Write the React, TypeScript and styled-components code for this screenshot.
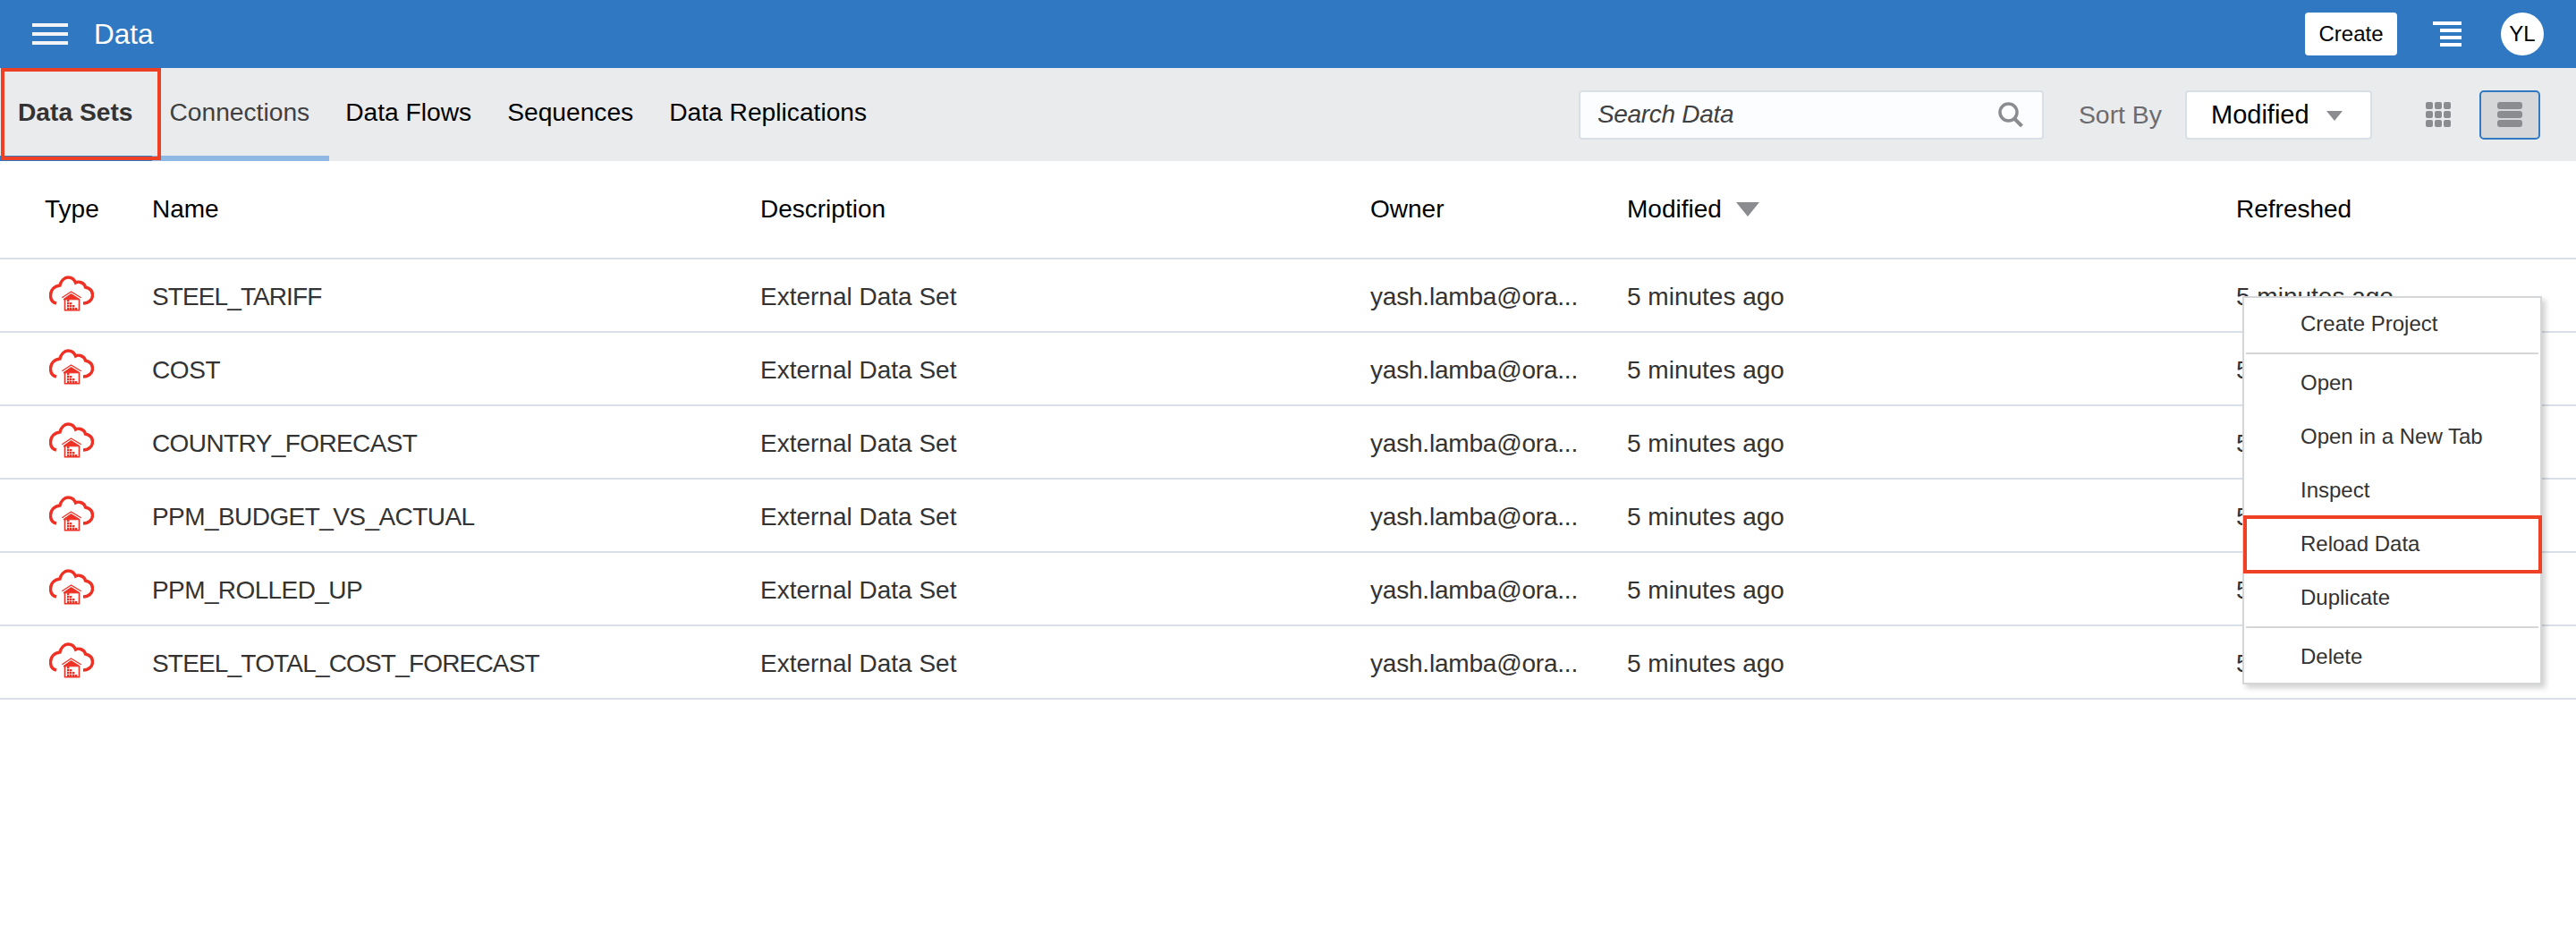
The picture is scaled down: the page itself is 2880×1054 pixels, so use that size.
import React from "react";
import styled, { createGlobalStyle } from "styled-components";

const GlobalStyle = createGlobalStyle`
  html, body {
    margin: 0;
    padding: 0;
    background: #fff;
    font-family: "Liberation Sans", Arial, sans-serif;
  }
`;

const Page = styled.div`
  position: relative;
  width: 2880px;
  height: 1054px;
  overflow: hidden;
  background: #fff;
`;

const Header = styled.header`
  display: flex;
  align-items: center;
  height: 76px;
  padding: 0 36px;
  background: #3079c2;
  color: #fff;
`;

const Hamburger = styled.div`
  display: flex;
  flex-direction: column;
  justify-content: space-between;
  width: 40px;
  height: 24px;
  margin-right: 29px;

  span {
    height: 4px;
    background: #f2f4f7;
  }
`;

const PageTitle = styled.div`
  flex: 1;
  font-size: 31.5px;
`;

const CreateButton = styled.button`
  width: 103px;
  height: 48px;
  padding: 0;
  border: none;
  border-radius: 4px;
  background: #fff;
  color: #000;
  font-family: inherit;
  font-size: 24px;
`;

const TocIcon = styled.div`
  display: flex;
  flex-direction: column;
  align-items: flex-end;
  gap: 4px;
  width: 32px;
  margin: 0 44px 0 40px;

  span {
    width: 24px;
    height: 4px;
    background: #fff;
  }

  span:first-child {
    width: 32px;
  }
`;

const Avatar = styled.div`
  display: flex;
  align-items: center;
  justify-content: center;
  width: 48px;
  height: 48px;
  border-radius: 50%;
  background: #fff;
  color: #000;
  font-size: 24px;
`;

const SubBar = styled.div`
  position: relative;
  display: flex;
  align-items: center;
  height: 104px;
  padding-right: 40px;
  background: #eaebed;
`;

const Tabs = styled.nav`
  flex: 1;
  display: flex;
  align-items: stretch;
  align-self: stretch;
`;

const Tab = styled.div<{ $active?: boolean; $muted?: boolean }>`
  display: flex;
  align-items: center;
  height: 100%;
  margin-left: ${(p) => (p.$active ? "20px" : "0")};
  margin-right: ${(p) => (p.$active ? "41px" : "40px")};
  padding-bottom: 6px;
  box-sizing: border-box;
  font-size: 28.2px;
  font-weight: ${(p) => (p.$active ? 700 : 400)};
  color: ${(p) => (p.$active ? "#333" : p.$muted ? "#404040" : "#000")};
`;

const TabTrack = styled.div`
  position: absolute;
  left: 0;
  bottom: 0;
  width: 368px;
  height: 6px;
  background: #8fb8e4;
`;

const TabThumb = styled.div`
  position: absolute;
  left: 0;
  bottom: 0;
  width: 170px;
  height: 6px;
  background: #3079c2;
`;

const SearchBox = styled.div`
  display: flex;
  align-items: center;
  justify-content: space-between;
  box-sizing: border-box;
  width: 520px;
  height: 55px;
  padding: 0 21px 0 19px;
  border: 2px solid #d9dfe6;
  border-radius: 4px;
  background: #fcfdfe;
  font-size: 28px;
  font-style: italic;
  letter-spacing: -0.3px;
  color: #404040;
`;

const SortLabel = styled.span`
  margin: 0 26px 0 39px;
  font-size: 28.4px;
  color: #6a6c70;
`;

const SortSelect = styled.div`
  display: flex;
  align-items: center;
  box-sizing: border-box;
  width: 209px;
  height: 55px;
  padding-left: 27px;
  border: 2px solid #d9dfe6;
  border-radius: 4px;
  background: #fff;
  color: #000;
  font-size: 29px;
`;

const Caret = styled.span<{ $w: number; $h: number }>`
  width: 0;
  height: 0;
  border-left: ${(p) => p.$w / 2}px solid transparent;
  border-right: ${(p) => p.$w / 2}px solid transparent;
  border-top: ${(p) => p.$h}px solid #8a8c90;
`;

const SortCaret = styled(Caret)`
  margin: 3px 0 0 19px;
`;

const ViewButton = styled.div<{ $selected?: boolean }>`
  display: flex;
  align-items: center;
  justify-content: center;
  box-sizing: border-box;
  width: 68px;
  height: 55px;
  margin-left: ${(p) => (p.$selected ? "12px" : "40px")};
  border: 2px solid ${(p) => (p.$selected ? "#3079c2" : "transparent")};
  border-radius: 5px;
  background: ${(p) => (p.$selected ? "#d6d7d9" : "transparent")};
`;

const GridDots = styled.div`
  display: grid;
  grid-template-columns: repeat(3, 8px);
  grid-auto-rows: 8px;
  gap: 2px;

  span {
    border-radius: 2px;
    background: #8a8c90;
  }
`;

const ListBars = styled.div`
  display: flex;
  flex-direction: column;
  gap: 2px;

  span {
    width: 28px;
    height: 8px;
    border-radius: 3px;
    background: #8a8c90;
  }
`;

const COLUMNS = "170px 680px 682px 287px 681px 1fr";

const HeadRow = styled.div`
  display: grid;
  grid-template-columns: ${COLUMNS};
  align-items: center;
  box-sizing: border-box;
  height: 110px;
  border-bottom: 2px solid #d9dfe6;
  font-size: 28px;
  color: #000;
`;

const HeadCell = styled.div<{ $first?: boolean }>`
  display: flex;
  align-items: center;
  gap: 16px;
  padding-left: ${(p) => (p.$first ? "50px" : "0")};
`;

const Row = styled.div`
  display: grid;
  grid-template-columns: ${COLUMNS};
  align-items: center;
  box-sizing: border-box;
  height: 82px;
  border-bottom: 2px solid #d9dfe6;
  font-size: 28px;
  color: #333;
`;

const TypeCell = styled.div`
  display: flex;
  padding: 0 0 4px 55px;
`;

const Cell = styled.div<{ $tracking?: number }>`
  padding-top: 4px;
  white-space: nowrap;
  letter-spacing: ${(p) => p.$tracking ?? 0}px;
`;

const Menu = styled.div`
  position: absolute;
  left: 2507px;
  top: 331px;
  box-sizing: border-box;
  width: 335px;
  height: 434px;
  border: 2px solid #d4d6d8;
  background: #fff;
  box-shadow: 4px 4px 6px rgba(0, 0, 0, 0.18);
  font-size: 24px;
  color: #333;
`;

const MenuItem = styled.div`
  display: flex;
  align-items: center;
  box-sizing: border-box;
  height: 60px;
  padding-left: 63px;

  &:first-child {
    height: 59px;
    padding-bottom: 2px;
  }
`;

const MenuDivider = styled.div`
  height: 2px;
  margin: 2px;
  background: #d4d6d8;
`;

const Callout = styled.div<{ $x: number; $y: number; $w: number; $h: number }>`
  position: absolute;
  left: ${(p) => p.$x}px;
  top: ${(p) => p.$y}px;
  box-sizing: border-box;
  width: ${(p) => p.$w}px;
  height: ${(p) => p.$h}px;
  border: 4px solid #ee4025;
`;

function SearchIcon() {
  return (
    <svg width="28" height="28" viewBox="0 0 28 28" fill="none" stroke="#8a8c90">
      <circle cx="11.5" cy="11.5" r="9.5" strokeWidth="3.5" />
      <path d="M18 18.5l8.5 8.5" strokeWidth="4" />
    </svg>
  );
}

const RED = "#ee3124";

function CloudWarehouseIcon() {
  // stepped "pixels" inside the warehouse door
  const blocks: [number, number][] = [
    [20, 27], [20, 30], [20, 33], [20, 36],
    [23, 30], [23, 33], [23, 36],
    [26, 33], [26, 36],
    [29, 36],
  ];
  return (
    <svg width="50" height="40" viewBox="0 0 50 40" fill="none">
      <path
        d="M8 31C3.5 30 1.5 26 1.5 22C1.5 16 6 11.5 12 11C13 6 17 2 21 2C25 2 28 4 29.5 8C31 7 33 7 35 7.5C38.5 8.5 40 11 40.5 13C45 14 48.5 17 48.5 22C48.5 27 44 31 38 31"
        stroke={RED}
        strokeWidth="3.4"
      />
      <path d="M14.3 24.7L24.5 18L35.7 24.7" stroke={RED} strokeWidth="1.3" />
      <path d="M16 26.5L24.5 20.5L34 26.5V26.8H16z" fill={RED} stroke={RED} strokeWidth="1" />
      <path d="M17.5 26.5V38.7H33.5V26.5" stroke={RED} strokeWidth="1.6" />
      {blocks.map(([x, y]) => (
        <rect key={`${x}-${y}`} x={x} y={y} width="2.4" height="2.4" fill={RED} />
      ))}
    </svg>
  );
}

const ROWS: { name: string; tracking: number }[] = [
  { name: "STEEL_TARIFF", tracking: -0.9 },
  { name: "COST", tracking: -0.4 },
  { name: "COUNTRY_FORECAST", tracking: -0.6 },
  { name: "PPM_BUDGET_VS_ACTUAL", tracking: -0.57 },
  { name: "PPM_ROLLED_UP", tracking: -0.6 },
  { name: "STEEL_TOTAL_COST_FORECAST", tracking: -0.82 },
];

export default function App() {
  return (
    <Page>
      <GlobalStyle />
      <Header>
        <Hamburger>
          <span />
          <span />
          <span />
        </Hamburger>
        <PageTitle>Data</PageTitle>
        <CreateButton>Create</CreateButton>
        <TocIcon>
          <span />
          <span />
          <span />
          <span />
        </TocIcon>
        <Avatar>YL</Avatar>
      </Header>

      <SubBar>
        <TabTrack />
        <TabThumb />
        <Tabs>
          <Tab $active>Data Sets</Tab>
          <Tab $muted>Connections</Tab>
          <Tab>Data Flows</Tab>
          <Tab>Sequences</Tab>
          <Tab>Data Replications</Tab>
        </Tabs>
        <SearchBox>
          Search Data
          <SearchIcon />
        </SearchBox>
        <SortLabel>Sort By</SortLabel>
        <SortSelect>
          Modified
          <SortCaret $w={18} $h={11} />
        </SortSelect>
        <ViewButton>
          <GridDots>
            {Array.from({ length: 9 }, (_, i) => (
              <span key={i} />
            ))}
          </GridDots>
        </ViewButton>
        <ViewButton $selected>
          <ListBars>
            <span />
            <span />
            <span />
          </ListBars>
        </ViewButton>
      </SubBar>

      <HeadRow>
        <HeadCell $first>Type</HeadCell>
        <HeadCell>Name</HeadCell>
        <HeadCell>Description</HeadCell>
        <HeadCell>Owner</HeadCell>
        <HeadCell>
          Modified
          <Caret $w={27} $h={16} />
        </HeadCell>
        <HeadCell>Refreshed</HeadCell>
      </HeadRow>

      {ROWS.map((row) => (
        <Row key={row.name}>
          <TypeCell>
            <CloudWarehouseIcon />
          </TypeCell>
          <Cell $tracking={row.tracking}>{row.name}</Cell>
          <Cell>External Data Set</Cell>
          <Cell $tracking={-0.2}>yash.lamba@ora...</Cell>
          <Cell>5 minutes ago</Cell>
          <Cell>5 minutes ago</Cell>
        </Row>
      ))}

      <Menu>
        <MenuItem>Create Project</MenuItem>
        <MenuDivider />
        <MenuItem>Open</MenuItem>
        <MenuItem>Open in a New Tab</MenuItem>
        <MenuItem>Inspect</MenuItem>
        <MenuItem>Reload Data</MenuItem>
        <MenuItem>Duplicate</MenuItem>
        <MenuDivider />
        <MenuItem>Delete</MenuItem>
      </Menu>

      <Callout $x={1} $y={76} $w={179} $h={103} />
      <Callout $x={2508} $y={576} $w={334} $h={65} />
    </Page>
  );
}
